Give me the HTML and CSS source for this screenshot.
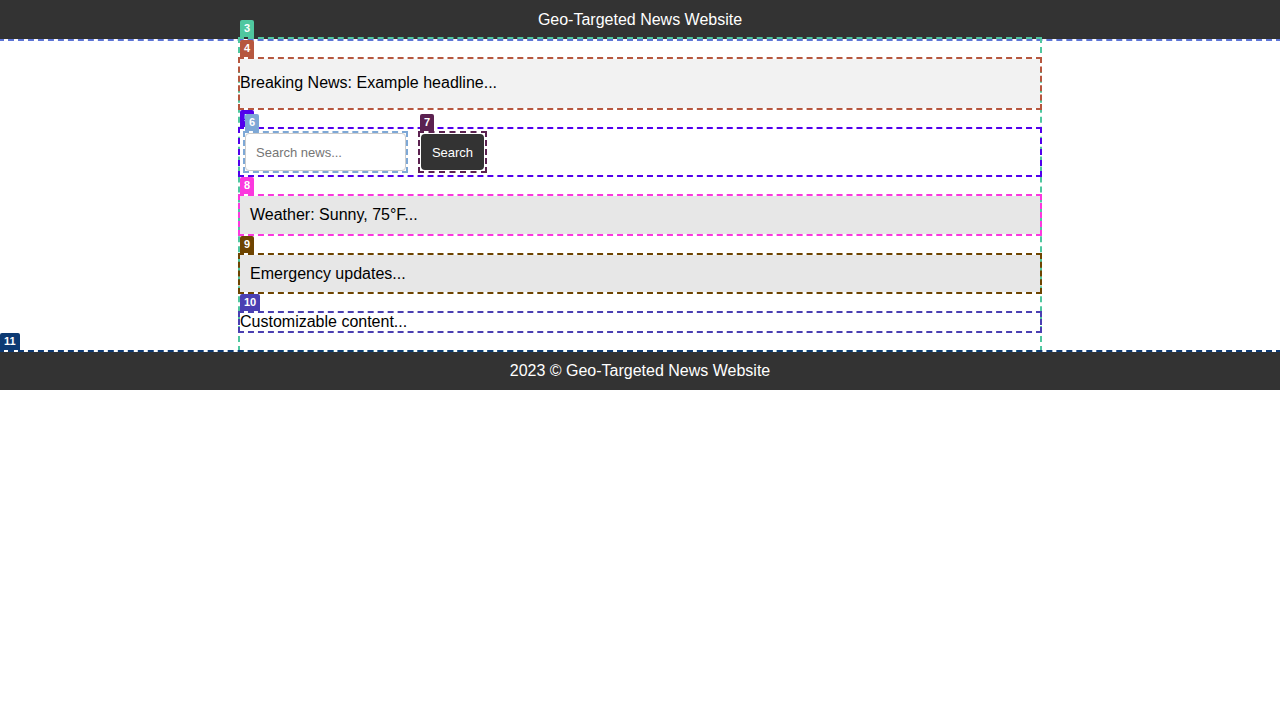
FILE: index.html
```html
<!DOCTYPE html>
<html lang="en">
<head>
<meta charset="utf-8">
<title>Geo-Targeted News Website</title>
<link rel="stylesheet" href="styles.css">
</head>
<body>
<header class="site-header ol ol-1">
  <span class="site-title">Geo-Targeted News Website</span>
</header>
<main class="main">
  <div class="container ol ol-3">
    <span class="tag tag-3">3</span>
    <div class="breaking ol ol-4"><span class="tag tag-4">4</span>Breaking News: Example headline...</div>
    <form class="search ol ol-5">
      <span class="tag tag-5">5</span>
      <span class="field ol ol-6"><span class="tag tag-6">6</span><input class="search-input" type="text" placeholder="Search news..."></span>
      <span class="btn-wrap ol ol-7"><span class="tag tag-7">7</span><button class="search-btn" type="button">Search</button></span>
    </form>
    <div class="panel ol ol-8"><span class="tag tag-8">8</span>Weather: Sunny, 75°F...</div>
    <div class="panel panel-tight ol ol-9"><span class="tag tag-9">9</span>Emergency updates...</div>
    <div class="custom ol ol-10"><span class="tag tag-10">10</span>Customizable content...</div>
  </div>
</main>
<footer class="site-footer ol ol-11">
  <span class="tag tag-11">11</span>
  <span class="footer-text">2023 © Geo-Targeted News Website</span>
</footer>
</body>
</html>
```

FILE: styles.css
```css
html, body {
  margin: 0;
  padding: 0;
  background: #ffffff;
}

body {
  font-family: "Liberation Sans", Arial, sans-serif;
  font-size: 16px;
  color: #000000;
}

/* debug outlines */
.ol {
  position: relative;
  outline-width: 2px;
  outline-style: dashed;
}
.ol-1 { outline-color: #5c74d6; }
.ol-3 { outline-color: #4fc79f; }
.ol-4 { outline-color: #b6573f; }
.ol-5 { outline-color: #5200ec; }
.ol-6 { outline-color: #7ea8d6; }
.ol-7 { outline-color: #5b2150; }
.ol-8 { outline-color: #fb38de; }
.ol-9 { outline-color: #6e4400; }
.ol-10 { outline-color: #4a3fb2; }
.ol-11 { outline-color: #0d3a73; }

.tag {
  position: absolute;
  left: 0;
  bottom: calc(100% + 2px);
  z-index: 10;
  padding: 0 4px;
  height: 17px;
  line-height: 17px;
  font-size: 11px;
  font-weight: bold;
  color: #ffffff;
  border-radius: 2px 2px 0 0;
  white-space: nowrap;
}
.tag-3 { background: #4fc79f; }
.tag-4 { background: #b6573f; }
.tag-5 { background: #5200ec; }
.tag-6 { background: #7ea8d6; }
.tag-7 { background: #5b2150; }
.tag-8 { background: #fb38de; }
.tag-9 { background: #6e4400; }
.tag-10 { background: #4a3fb2; }
.tag-11 { background: #0d3a73; }

/* header */
.site-header {
  background: #333333;
  color: #ffffff;
  height: 39px;
  box-sizing: border-box;
  padding: 10px 0;
  line-height: 19px;
  text-align: center;
}

.main {
  display: block;
}

.container {
  width: 800px;
  margin: 0 auto;
  box-sizing: border-box;
  padding: 20px 0 19px;
  display: flex;
  flex-direction: column;
  gap: 21px;
}

.breaking {
  background: #f2f2f2;
  padding: 15px 0 16px;
  line-height: 18px;
}

.search {
  display: flex;
  align-items: center;
  gap: 14px;
  padding: 4px 5px;
  margin: 0;
}

.field {
  display: block;
  width: 161px;
  height: 38px;
}

.search-input {
  display: block;
  box-sizing: border-box;
  width: 161px;
  height: 38px;
  margin: 0;
  padding: 10px;
  border: 1px solid #cccccc;
  border-radius: 4px;
  font-family: "Liberation Sans", Arial, sans-serif;
  font-size: 13px;
  color: #000000;
  background: #ffffff;
}
.search-input::placeholder {
  color: #757575;
}

.btn-wrap {
  display: block;
  padding: 1px;
  height: 36px;
}

.search-btn {
  display: block;
  box-sizing: border-box;
  width: 63px;
  height: 36px;
  margin: 0;
  padding: 0 10px;
  border: none;
  border-radius: 4px;
  background: #333333;
  color: #ffffff;
  font-family: "Liberation Sans", Arial, sans-serif;
  font-size: 13px;
}

.panel {
  background: #e7e7e7;
  padding: 10px;
  line-height: 18px;
}

.panel-tight {
  padding-bottom: 9px;
}

.custom {
  line-height: 18px;
}

/* footer */
.site-footer {
  margin-top: 2px;
  background: #333333;
  color: #ffffff;
  height: 38px;
  box-sizing: border-box;
  padding: 10px 0;
  line-height: 18px;
  text-align: center;
}
```
